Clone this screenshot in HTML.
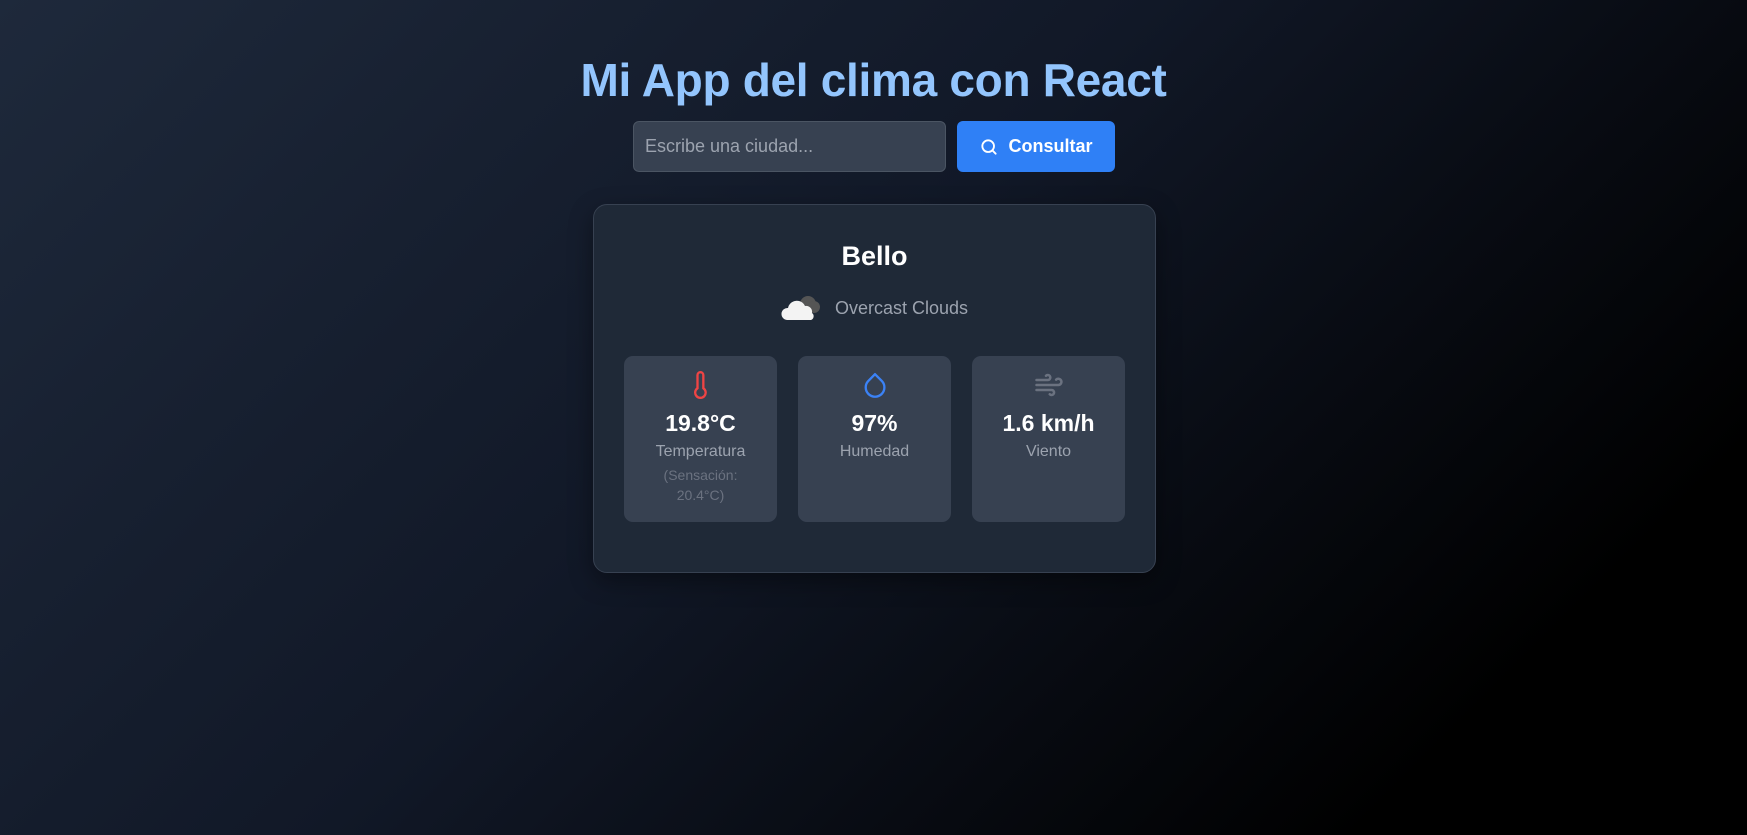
<!DOCTYPE html>
<html><head><meta charset="utf-8"><style>
*{box-sizing:border-box;margin:0;padding:0}
body{width:1747px;height:835px;overflow:hidden;font-family:"Liberation Sans",sans-serif;background:linear-gradient(135deg,#1e293b 0%,#111827 45%,#000 85%);position:relative}
.abs{position:absolute}
h1{position:absolute;left:0;width:1747px;top:53px;text-align:center;color:#93c5fd;font-size:46px;font-weight:bold;letter-spacing:-0.3px}
.inp{left:633px;top:121px;width:313px;height:51px;background:#374151;border:1px solid #4b5563;border-radius:6px;color:#9ca3af;font-size:18px;padding:14px 11px}
.btn{left:957px;top:121px;width:158px;height:51px;background:#2f80f6;border-radius:6px;color:#fff;font-weight:bold;font-size:18px;display:flex;align-items:center;justify-content:center;gap:9px}
.card{left:593px;top:204px;width:563px;height:369px;background:#1f2937;border:1px solid #374151;border-radius:14px;box-shadow:0 8px 24px rgba(0,0,0,.4)}
.city{left:0;width:100%;top:36px;text-align:center;color:#fff;font-size:27px;font-weight:bold}
.desc{left:0;width:100%;top:88px;text-align:center;color:#9ca3af;font-size:18px;display:flex;justify-content:center;align-items:center;gap:12px}
.tile{top:151px;width:153px;height:166px;background:#374151;border-radius:9px;text-align:center}
.tile svg{margin-top:14px}
.val{color:#fff;font-size:23px;font-weight:bold;margin-top:5px}
.lbl{color:#9ca3af;font-size:16px;margin-top:6px}
.sub{color:#6b7280;font-size:14px;margin-top:4px;line-height:20px}
</style></head><body>
<h1>Mi App del clima con React</h1>
<div class="abs inp">Escribe una ciudad...</div>
<div class="abs btn"><svg width="20" height="20" viewBox="0 0 24 24" fill="none" stroke="#fff" stroke-width="2.2" stroke-linecap="round"><circle cx="11" cy="11" r="7"/><path d="M20 20l-4-4"/></svg>Consultar</div>
<div class="abs card">
<div class="abs city">Bello</div>
<div class="abs desc"><svg width="42" height="30" viewBox="0 0 42 30"><circle cx="27" cy="11" r="8" fill="#555"/><circle cx="33" cy="14" r="6" fill="#555"/><path d="M6 27a6 6 0 0 1 1-12 9 9 0 0 1 17-2 6 6 0 0 1 7 7 4 4 0 0 1-1 7z" fill="#f3f3f3"/></svg><span>Overcast Clouds</span></div>
<div class="abs tile" style="left:30px"><svg width="28" height="30" viewBox="0 0 24 24" fill="none" stroke="#ef4444" stroke-width="2" stroke-linecap="round"><path d="M14 14.76V3.5a2.5 2.5 0 0 0-5 0v11.26a4.5 4.5 0 1 0 5 0z"/></svg><div class="val">19.8°C</div><div class="lbl">Temperatura</div><div class="sub">(Sensación:<br>20.4°C)</div></div>
<div class="abs tile" style="left:204px"><svg width="28" height="30" viewBox="0 0 24 24" fill="none" stroke="#3b82f6" stroke-width="2" stroke-linejoin="round"><path d="M12 2.7l5.7 5.7a8 8 0 1 1-11.3 0z"/></svg><div class="val">97%</div><div class="lbl">Humedad</div></div>
<div class="abs tile" style="left:378px"><svg width="30" height="30" viewBox="0 0 24 24" fill="none" stroke="#6b7280" stroke-width="2" stroke-linecap="round"><path d="M17.7 7.7A2.5 2.5 0 1 1 19.5 12H2M9.6 4.6A2 2 0 1 1 11 8H2M12.6 19.4A2 2 0 1 0 14 16H2"/></svg><div class="val">1.6 km/h</div><div class="lbl">Viento</div></div>
</div>
</body></html>
